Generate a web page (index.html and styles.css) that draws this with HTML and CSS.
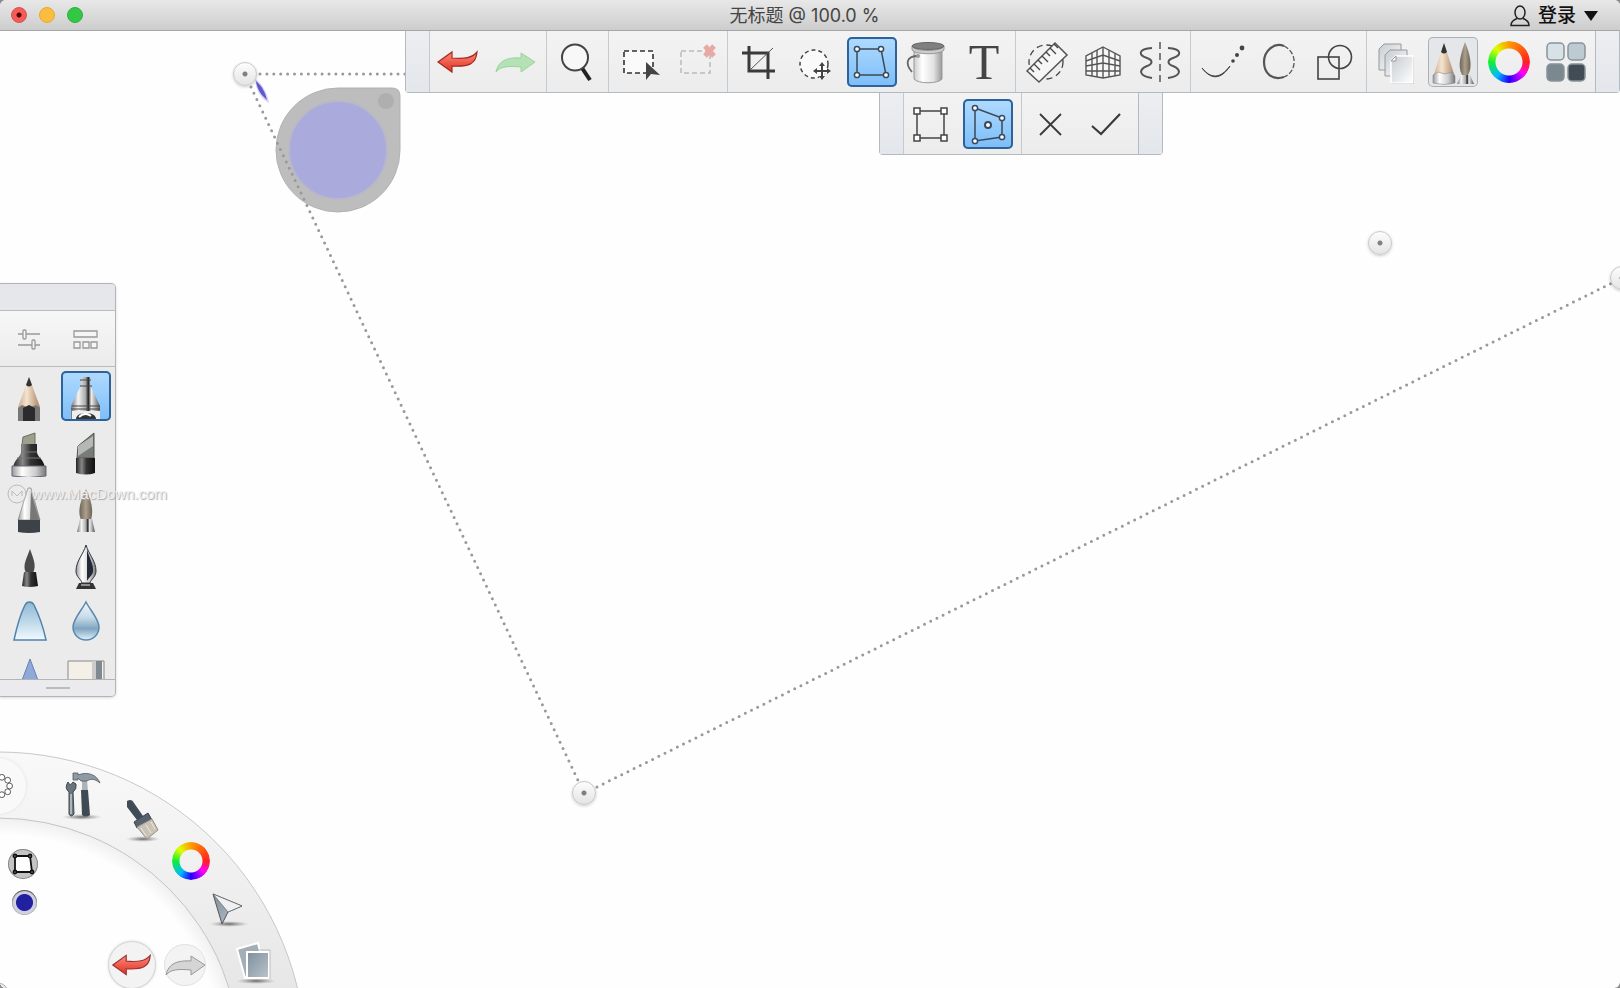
FILE: index.html
```html
<!DOCTYPE html>
<html lang="zh-CN">
<head>
  <meta charset="UTF-8">
  <meta name="viewport" content="width=device-width, initial-scale=1.0">
  <title>无标题 @ 100.0 %</title>
  <link rel="stylesheet" href="styles.css">
</head>
<body>
  <!-- shared gradients -->
  <svg class="defs" aria-hidden="true">
    <defs>
      <linearGradient id="red" x1="0" y1="0" x2="0" y2="1"><stop offset="0" stop-color="#ff8a7a"/><stop offset="1" stop-color="#df2f20"/></linearGradient>
      <linearGradient id="steel"><stop offset="0" stop-color="#777"/><stop offset=".25" stop-color="#f4f4f4"/><stop offset=".5" stop-color="#aaa"/><stop offset=".6" stop-color="#222"/><stop offset=".7" stop-color="#eee"/><stop offset="1" stop-color="#555"/></linearGradient>
      <linearGradient id="dark"><stop offset="0" stop-color="#222"/><stop offset=".3" stop-color="#888"/><stop offset=".55" stop-color="#333"/><stop offset="1" stop-color="#111"/></linearGradient>
      <linearGradient id="silver"><stop offset="0" stop-color="#999"/><stop offset=".3" stop-color="#fff"/><stop offset=".7" stop-color="#ccc"/><stop offset="1" stop-color="#777"/></linearGradient>
      <linearGradient id="wood"><stop offset="0" stop-color="#c9ad90"/><stop offset=".4" stop-color="#f5e4d0"/><stop offset="1" stop-color="#a98460"/></linearGradient>
      <linearGradient id="hair"><stop offset="0" stop-color="#6d655a"/><stop offset=".5" stop-color="#aca08c"/><stop offset="1" stop-color="#6d6254"/></linearGradient>
      <linearGradient id="water" x1="0" y1="0" x2="0" y2="1"><stop offset="0" stop-color="#8fb8d2"/><stop offset=".5" stop-color="#bcd7e8"/><stop offset="1" stop-color="#f2f9ff"/></linearGradient>
      <linearGradient id="drop" x1="0" y1="0" x2="0" y2="1"><stop offset="0" stop-color="#f0f8fc"/><stop offset=".4" stop-color="#c8dce8"/><stop offset=".7" stop-color="#7fa5c0"/><stop offset="1" stop-color="#e0f2fc"/></linearGradient>
      <linearGradient id="can"><stop offset="0" stop-color="#ccc"/><stop offset=".3" stop-color="#fff"/><stop offset=".7" stop-color="#e2e2e2"/><stop offset="1" stop-color="#999"/></linearGradient>
      <linearGradient id="paper" x1="0" y1="0" x2="1" y2="1"><stop offset="0" stop-color="#c5ccd2"/><stop offset="1" stop-color="#fff"/></linearGradient>
      <linearGradient id="slate" x1="0" y1="0" x2="1" y2="1"><stop offset="0" stop-color="#7f8e9d"/><stop offset="1" stop-color="#bac4cc"/></linearGradient>
      <linearGradient id="ring" x1="0" y1="0" x2="0" y2="1"><stop offset="0" stop-color="#f9f9f9"/><stop offset=".4" stop-color="#e6e6e6"/></linearGradient>
      <radialGradient id="well"><stop offset=".93" stop-color="#fefefe"/><stop offset="1" stop-color="#f0f0f0"/></radialGradient>
      <radialGradient id="floor"><stop offset="0" stop-color="#444" stop-opacity=".8"/><stop offset="1" stop-color="#888" stop-opacity="0"/></radialGradient>
    </defs>
  </svg>

  <div class="window">
    <header class="titlebar">
      <div class="lights">
        <button class="light close" aria-label="关闭"></button>
        <button class="light minimize" aria-label="最小化"></button>
        <button class="light maximize" aria-label="缩放"></button>
      </div>
      <h1 class="title">无标题 @ 100.0 %</h1>
      <button class="login">
        <svg width="20" height="22" viewBox="0 0 20 22" fill="none" stroke="#222" stroke-width="1.5"><ellipse cx="10" cy="7.500" rx="5" ry="6.500"/><path d="M7 13.500C3 15 1 16.500 1 20.500h18c0-4-2-5.500-6-7"/></svg>
        <span>登录</span>
        <svg width="14" height="10" viewBox="0 0 14 10"><path d="M0 0h14L7 10z" fill="#111"/></svg>
      </button>
    </header>

    <main class="canvas">
      <!-- distort outline and colour puck, in canvas coordinates -->
      <svg class="artwork" width="1620" height="957" viewBox="0 31 1620 957">
        <path d="M255 79c7 4 12 13 14 24-9-5-13-13-14-24z" fill="#c8c6f8" opacity=".8"/>
        <path d="M256 81c6 5 9 11 11 19-6-5-10-11-11-19z" fill="#5f58c8"/>
        <path d="M338 88h54q8 0 8 8v54a62 62 0 1 1-62-62z" fill="#bdbdbd" stroke="#b2b2b2"/>
        <circle cx="338" cy="150" r="49" fill="#aaaadc" stroke="#b8b8c8" stroke-width="2"/>
        <circle cx="386" cy="101" r="8" fill="#afafaf"/>
        <g fill="none" stroke="#999" stroke-width="3" stroke-linecap="round" stroke-dasharray="0 6.900">
          <path d="M260 74h160"/>
          <path d="M251 87L584 793"/>
          <path d="M597 787L1622 278"/>
        </g>
      </svg>
      <span class="handle handle-tl"></span>
      <span class="handle handle-bl"></span>
      <span class="handle handle-tr"></span>
      <span class="handle handle-center"></span>

      <div class="toolbars">
        <div class="toolbar">
          <div class="grip"></div>
          <div class="group">
            <button class="tool" aria-label="撤销"><svg viewBox="0 0 50 50"><path d="M3 25L17 15v6c13 1 20 0 25-6-1 12-8 15-25 14v6z" fill="url(#red)" stroke="#a32a20" stroke-width="1.2"/></svg></button>
            <button class="tool" aria-label="重做"><svg viewBox="0 0 50 50"><path d="M44 25L30 16v5C16 20 7 24 5 35c5-6 13-6 25-5v5z" fill="#b4e2b4" stroke="#9bd39e"/></svg></button>
          </div>
          <div class="group">
            <button class="tool" aria-label="缩放"><svg viewBox="0 0 50 50"><path d="M30 31l8 12" stroke="#222" stroke-width="4"/><circle cx="23" cy="20.500" r="13" fill="#f8f8f8" stroke="#444" stroke-width="2"/></svg></button>
          </div>
          <div class="group">
            <button class="tool" aria-label="选择"><svg viewBox="0 0 50 50"><rect x="9" y="14" width="29" height="22" fill="#fafafa" stroke="#333" stroke-width="1.600" stroke-dasharray="5 3"/><path d="M31 25v18l5-6 9 1z" fill="#444"/></svg></button>
            <button class="tool" aria-label="取消选择"><svg viewBox="0 0 50 50"><rect x="10" y="14" width="29" height="22" fill="none" stroke="#bbb" stroke-width="1.500" stroke-dasharray="5 3"/><path d="M34 9l9 10m0-10l-9 10" stroke="#e8a8a3" stroke-width="5"/></svg></button>
          </div>
          <div class="group">
            <button class="tool" aria-label="裁剪"><svg viewBox="0 0 50 50"><path d="M8 16h26v26M15 9v25h26" fill="none" stroke="#3a3a3a" stroke-width="3"/><path d="M16 33l23-22" stroke="#555"/></svg></button>
            <button class="tool" aria-label="快速变换"><svg viewBox="0 0 50 50"><circle cx="24" cy="27" r="14" fill="#fafafa" stroke="#444" stroke-width="1.500" stroke-dasharray="4 3"/><path d="M32 26v16M24 34h16" stroke="#fff" stroke-width="5"/><path d="M32 27v14M25 34h14" stroke="#444" stroke-width="2"/><path d="M32 25l3 4h-6zM32 43l3-4h-6zM23 34l4-3v6zM41 34l-4-3v6z" fill="#444"/></svg></button>
            <button class="tool selected" aria-label="变形"><svg viewBox="0 0 50 50" fill="#fff" stroke="#3a4a5a" stroke-width="1.500"><path d="M10 12h24l5 26H10z" fill="none"/><circle cx="10" cy="12" r="2.600"/><circle cx="34" cy="12" r="2.600"/><circle cx="39" cy="38" r="2.600"/><circle cx="10" cy="38" r="2.600"/></svg></button>
            <button class="tool" aria-label="填充"><svg viewBox="0 0 50 50"><path d="M11 11v31c4 5 24 5 28 0V11z" fill="url(#can)" stroke="#999"/><path d="M9 9c2 6 30 6 32 0v4c-3 5-29 5-32 0z" fill="#ccc" stroke="#888" stroke-width=".8"/><ellipse cx="25" cy="9" rx="16" ry="3.500" fill="#808080" stroke="#666"/><path d="M15 19C3 19 2 27 9 35" fill="none" stroke="#666" stroke-width="1.800"/><circle cx="15" cy="19" r="2" fill="#999"/></svg></button>
            <button class="tool letter">T</button>
          </div>
          <div class="group">
            <button class="tool" aria-label="尺子"><svg viewBox="0 0 50 50"><circle cx="24" cy="25" r="17" fill="none" stroke="#444" stroke-width="1.300" stroke-dasharray="6 4"/><path d="M5 34L33 6l12 12-28 27z" fill="#f6f6f6" stroke="#555" stroke-width="1.500"/><path d="M8 31l4 4m0-8l6 6m-2-10l4 4m0-8l6 6m-2-10l4 4m0-8l6 6m-2-10l4 4" stroke="#444" stroke-width="1.300"/></svg></button>
            <button class="tool" aria-label="透视"><svg viewBox="0 0 50 50" fill="none" stroke="#555" stroke-width="1.400"><path d="M25 10l17 9v19l-17 3-17-3V19z" fill="#f7f7f7"/><path d="M25 10v31M14 16v23M19 13v27M31 13v27M37 16v23M8 24l17-6 17 6M8 29l17-3 17 3M8 34h34"/></svg></button>
            <button class="tool" aria-label="对称"><svg viewBox="0 0 50 50" fill="none" stroke="#555"><path d="M26 5v41" stroke-width="1.500" stroke-dasharray="7 4"/><path d="M18 11C4 12 4 18 13 21c6 2 6 6 0 8-9 4-8 10 5 12M34 11c14 1 14 7 5 10-6 2-6 6 0 8 9 4 8 10-5 12" stroke-width="2"/></svg></button>
          </div>
          <div class="group">
            <button class="tool" aria-label="稳定笔触"><svg viewBox="0 0 50 50"><path d="M4 31c9 11 18 11 28-2-9 14-19 14-28 2z" fill="#444" stroke="#444"/><circle cx="35" cy="24" r="1.800" fill="#444"/><circle cx="39" cy="18" r="2" fill="#444"/><circle cx="44" cy="11" r="2.400" fill="#444"/></svg></button>
            <button class="tool" aria-label="椭圆"><svg viewBox="0 0 50 50" fill="none" stroke="#555"><path d="M30 9C20 5 10 14 10 25s8 19 20 15" stroke-width="2.200"/><path d="M30 9c13 6 14 25 0 31" stroke-width="1.300" stroke-dasharray="5 2"/></svg></button>
            <button class="tool" aria-label="形状"><svg viewBox="0 0 50 50" fill="none" stroke="#444" stroke-width="1.600"><rect x="8" y="20" width="21" height="22"/><circle cx="30" cy="20" r="11.500"/></svg></button>
          </div>
          <div class="group">
            <button class="tool" aria-label="图层"><svg viewBox="0 0 50 50" stroke="#999"><path d="M11 7h17v26H6V12z" fill="url(#paper)"/><path d="M17 13h17v26H12V18z" fill="url(#paper)"/><path d="M40 20v26H18" fill="none" stroke="#888" stroke-width="2"/><path d="M23 19h17v27H18V24z" fill="url(#paper)" stroke="#fff" stroke-width="1.500"/><path d="M18 24h5v-5z" fill="#fff"/></svg></button>
            <button class="tool framed" aria-label="笔刷"><svg viewBox="0 0 50 50"><path d="M16 6l11 34c-5 8-18 8-22 0z" fill="url(#wood)"/><path d="M16 6l3 9c-2 2-4 2-6 0z" fill="#333"/><path d="M5 38l5-3 7 2 7-2 3 4v7q-11 3-22 0z" fill="url(#silver)" stroke="#888" stroke-width=".6"/><path d="M37 5c5 12 8 25 3 33h-6c-5-9-1-22 3-33z" fill="url(#hair)"/><path d="M33 38h9l4 9H29z" fill="url(#steel)"/></svg></button>
            <button class="tool" aria-label="颜色"><span class="color-ring"></span></button>
            <button class="tool" aria-label="界面"><svg viewBox="0 0 50 50" stroke="#899399" stroke-width="1.500"><rect x="8" y="6" width="17" height="17" rx="4" fill="#d7e1e6"/><rect x="29" y="6" width="17" height="17" rx="4" fill="#bccbd2"/><rect x="8" y="27" width="17" height="17" rx="4" fill="#7a898f"/><rect x="29" y="27" width="17" height="17" rx="4" fill="#414c54"/></svg></button>
          </div>
          <div class="grip"></div>
        </div>

        <div class="subbar">
          <div class="grip"></div>
          <div class="group">
            <button class="tool" aria-label="自由变换"><svg viewBox="0 0 50 50" fill="#fff" stroke="#444" stroke-width="1.500"><rect x="10" y="12" width="27" height="27" fill="none"/><path d="M7 9h6v6H7zM34 9h6v6h-6zM7 36h6v6H7zM34 36h6v6h-6z"/></svg></button>
            <button class="tool selected" aria-label="扭曲"><svg viewBox="0 0 50 50" fill="#fff" stroke="#3a4a5a" stroke-width="1.500"><path d="M12 9l27 10v19l-27 4z" fill="none"/><circle cx="12" cy="9" r="2.600"/><circle cx="39" cy="19" r="2.600"/><circle cx="39" cy="38" r="2.600"/><circle cx="12" cy="42" r="2.600"/><circle cx="25" cy="26" r="3" stroke-width="2"/></svg></button>
          </div>
          <div class="group">
            <button class="tool" aria-label="取消"><svg viewBox="0 0 50 50"><path d="M15 15l21 21m0-21L15 36" stroke="#3a3a3a" stroke-width="1.800"/></svg></button>
            <button class="tool" aria-label="完成"><svg viewBox="0 0 50 50"><path d="M11 27l9 8 19-20" fill="none" stroke="#3a3a3a" stroke-width="2.200"/></svg></button>
          </div>
          <div class="grip"></div>
        </div>
      </div>

      <aside class="palette">
        <div class="palette-grip"></div>
        <div class="palette-head">
          <button class="tool" aria-label="笔刷属性"><svg viewBox="0 0 50 50" fill="#f5f5f5" stroke="#999" stroke-width="1.300"><path d="M14 20h22M14 31h22"/><rect x="19" y="16" width="3" height="9" rx="1"/><rect x="28" y="26" width="3" height="9" rx="1"/></svg></button>
          <button class="tool" aria-label="笔刷库"><svg viewBox="0 0 50 50" fill="#f5f5f5" stroke="#999" stroke-width="1.300"><path d="M13 17h23v6H13zM13 28h6v6h-6zM22 28h6v6h-6zM30 28h6v6h-6z"/></svg></button>
        </div>
        <div class="brushes">
          <button class="tool" aria-label="铅笔"><svg viewBox="0 0 50 50"><path d="M25 6l11 30v14H14V36z" fill="url(#wood)"/><path d="M25 6l3 8c-2 2-4 2-6 0z" fill="#333"/><path d="M14 37l4-3 7 3 7-3 4 3v13H14z" fill="#777"/><path d="M19 37l6-3 6 3v13H19z" fill="#2b2b2b"/></svg></button>
          <button class="tool selected" aria-label="喷枪"><svg viewBox="0 0 50 50"><path d="M20 6h9v9l2 3 8 17v13H10V35l8-17 2-3z" fill="url(#steel)"/><path d="M19 9h11M19 15h12M11 35h28M10 38h29" stroke="#444"/><path d="M11 40h28v8H11z" fill="#eee"/><path d="M15 48c0-8 20-8 20 0" fill="#333"/><path d="M18 46c4-4 8-4 12-1" stroke="#fff" fill="none" stroke-width="2"/></svg></button>
          <button class="tool" aria-label="马克笔"><svg viewBox="0 0 50 50"><path d="M19 10l12-4v12H18z" fill="#9ca18d" stroke="#6b705d"/><path d="M17 17h16v8c0 5 7 7 8 16H9c1-9 8-11 8-16z" fill="url(#dark)"/><path d="M17 25h16M13 31h24" stroke="#777"/><path d="M8 39h34v10q-17 3-34 0z" fill="url(#silver)" stroke="#667"/></svg></button>
          <button class="tool" aria-label="凿头笔"><svg viewBox="0 0 50 50"><path d="M17 19L33 6v25H16z" fill="#777c78" stroke="#555"/><path d="M17 19l15-10v10L17 29z" fill="#b5b8b5"/><path d="M15 31h19v15q-9 3-19 0z" fill="url(#dark)"/></svg></button>
          <button class="tool" aria-label="圆珠笔"><svg viewBox="0 0 50 50"><path d="M24 5h3l9 32H14z" fill="url(#silver)" stroke="#777" stroke-width=".6"/><path d="M27 8l8 29h-9z" fill="#777"/><path d="M14 37h22v12q-11 2-22 0z" fill="#3d4248"/></svg></button>
          <button class="tool" aria-label="画笔"><svg viewBox="0 0 50 50"><path d="M25 6c5 10 8 21 5 31H20c-4-10 0-21 5-31z" fill="url(#hair)"/><path d="M19 36h12l3 13H16z" fill="url(#steel)"/></svg></button>
          <button class="tool" aria-label="合成画笔"><svg viewBox="0 0 50 50"><path d="M26 10c3 9 7 16 3 24h-7c-4-8 1-15 4-24z" fill="#4a4a48"/><path d="M20 33h12l2 14q-9 2-16 0z" fill="url(#dark)"/></svg></button>
          <button class="tool" aria-label="钢笔"><svg viewBox="0 0 50 50"><path d="M25 6c3 10 10 16 10 26 0 6-5 8-6 12h-8c-1-4-6-6-6-12C15 22 22 16 25 6z" fill="url(#silver)" stroke="#334"/><path d="M26 10c2 9 7 15 6 23-1 4-4 5-6 9z" fill="#222a38"/><path d="M18 44h14l3 6H15z" fill="#333"/><path d="M20 46h9" stroke="#eee"/></svg></button>
          <button class="tool" aria-label="涂抹"><svg viewBox="0 0 50 50"><path d="M21 10c2-4 7-4 9 0 5 10 9 21 12 35H10c3-14 6-25 11-35z" fill="url(#water)" stroke="#4f82ad" stroke-width="1.500"/></svg></button>
          <button class="tool" aria-label="模糊"><svg viewBox="0 0 50 50"><path d="M25 7c4 8 13 17 13 25a13 13 0 0 1-26 0c0-8 9-17 13-25z" fill="url(#drop)" stroke="#5a88ad" stroke-width="1.500"/></svg></button>
          <button class="tool" aria-label="锐化"><svg viewBox="0 0 50 50"><path d="M26 8l15 40H11z" fill="#8fa9d8" stroke="#6480b5"/></svg></button>
          <button class="tool" aria-label="橡皮"><svg viewBox="0 0 50 50"><path d="M7 10h36v40H7z" fill="#f4f0e8" stroke="#888"/><path d="M31 10h4v40h-4z" fill="#ccc"/><path d="M35 10h6v40h-6z" fill="#808890"/></svg></button>
        </div>
        <div class="palette-foot"></div>
      </aside>

      <div class="watermark">
        <svg width="20" height="20" viewBox="0 0 20 20" fill="none" stroke="#bbb"><circle cx="10" cy="10" r="9"/><path d="M5 12V7l5 5 5-5v5"/></svg>
        <span>www.MacDown.com</span>
      </div>

      <div class="lagoon">
        <svg class="lagoon-ring" viewBox="0 0 310 237">
          <circle cx="-2" cy="309" r="308" fill="url(#ring)" stroke="#c8c8c8"/>
          <circle cx="-2" cy="309" r="242" fill="url(#well)" stroke="#c4c4c4"/>
          <circle cx="-2" cy="242" r="10" fill="#eee" stroke="#aaa"/>
        </svg>
        <button class="lagoon-btn menu" aria-label="控件"><svg viewBox="0 0 56 56" fill="#fff" stroke="#555"><circle cx="31" cy="19" r="3"/><circle cx="37" cy="22" r="3"/><circle cx="39" cy="28" r="3"/><circle cx="37" cy="34" r="3"/><circle cx="31" cy="37" r="3"/></svg></button>
        <button class="lagoon-btn tools" aria-label="工具"><svg viewBox="0 0 50 50"><ellipse cx="25" cy="47" rx="20" ry="3" fill="url(#floor)"/><path d="M11 12q2 5 5 0l3 2q1 5-3 8l1 22q-3 4-5 0V22q-5-4-1-10z" fill="#6b757e" stroke="#3f4850"/><path d="M14 24v20" stroke="#c5cdd3" stroke-width="1.500"/><path d="M25 10h5l1 12h-6z" fill="#aab3ba"/><path d="M24 20h7l2 25q-4 3-8 0z" fill="#3f4a54"/><path d="M16 3h5v2c10-4 19 0 22 8-6-5-10-4-13-2h-6l-3-3v2h-5z" fill="#8f9aa3" stroke="#4f5962" stroke-width=".8"/></svg></button>
        <button class="lagoon-btn brush" aria-label="笔刷"><svg viewBox="0 0 50 50"><ellipse cx="25" cy="45" rx="17" ry="3" fill="url(#floor)"/><path d="M9 7q5-3 7 2l9 13-6 4L9 13z" fill="#404b58"/><path d="M16 28l14-9 4 7-15 8z" fill="#56626f" stroke="#39434e"/><path d="M19 33l15-8 6 11-11 9z" fill="#c9c2b7" stroke="#999184"/><path d="M23 34l5 8m0-11l5 8m0-11l4 7" stroke="#eee8de"/></svg></button>
        <button class="lagoon-btn color" aria-label="颜色"><span class="color-ring"></span></button>
        <button class="lagoon-btn view" aria-label="视图"><svg viewBox="0 0 50 50"><ellipse cx="26" cy="41" rx="20" ry="3" fill="url(#floor)"/><path d="M10 11l29 12-14 6-6 12z" fill="url(#slate)" stroke="#555" stroke-linejoin="round"/><path d="M10 11l29 12-14 6z" fill="#eef0f2" stroke="#666" stroke-width=".7"/></svg></button>
        <button class="lagoon-btn files" aria-label="文件"><svg viewBox="0 0 50 50"><ellipse cx="27" cy="45" rx="20" ry="3" fill="url(#floor)"/><path d="M8 13l21-6 7 30-20 5z" fill="#a3afb6" stroke="#fff" stroke-width="2"/><path d="M18 16h22v26H18z" fill="url(#slate)" stroke="#fff" stroke-width="2"/><path d="M17 14h24v29" fill="none" stroke="#aaa" stroke-width=".7"/></svg></button>
        <button class="lagoon-btn puck" aria-label="当前工具"><svg viewBox="0 0 30 30" fill="#ddd" stroke="#111" stroke-width="1.800"><path d="M7 7h15l2 16H7z" fill="#fff"/><circle cx="7" cy="7" r="1.500"/><circle cx="22" cy="7" r="1.500"/><circle cx="24" cy="23" r="1.500"/><circle cx="7" cy="23" r="1.500"/></svg></button>
        <button class="lagoon-btn swatch" aria-label="当前颜色"></button>
        <button class="lagoon-btn undo" aria-label="撤销"><svg viewBox="0 0 50 50"><path d="M5 25l14-10v6c13 1 20 0 25-6-1 12-8 15-25 14v6z" fill="url(#red)" stroke="#933" stroke-width="1.200"/></svg></button>
        <button class="lagoon-btn redo" aria-label="重做"><svg viewBox="0 0 42 42"><path d="M41 21L27 12v5C13 16 4 20 2 31c5-6 13-6 25-5v5z" fill="#d5d5d5" stroke="#999"/></svg></button>
      </div>
    </main>
  </div>
</body>
</html>
```
FILE: styles.css
```css
* { box-sizing: border-box; }
body { margin: 0; background: #8a8a8a; font-family: Inter, "Noto Sans CJK SC", sans-serif; }
button { padding: 0; border: none; background: none; font: inherit; color: inherit; cursor: pointer; }
svg { display: block; }
.defs { position: absolute; width: 0; height: 0; }

.window { display: flex; flex-direction: column; height: 100vh; border-radius: 6px; overflow: hidden; background: #fefefe; }

/* title bar */
.titlebar { display: grid; grid-template-columns: 1fr auto 1fr; align-items: center; height: 31px; padding: 0 22px 0 11px; background: linear-gradient(#e8e8e8, #cdcdcd); border-bottom: 1px solid #a6a6a6; }
.lights { display: flex; gap: 12px; }
.light { width: 16px; height: 16px; border-radius: 50%; }
.close { background: radial-gradient(circle, #5a0505 2px, #f25e57 3px); border: 1px solid #dd4f48; }
.minimize { background: #fbbd3f; border: 1px solid #e5a937; }
.maximize { background: #32c846; border: 1px solid #2bb13c; }
.title { margin: 0; padding-top: 2px; font-size: 18px; line-height: 28px; font-weight: 400; color: #444; }
.login { display: flex; align-items: center; gap: 8px; justify-self: end; padding-top: 2px; font-size: 19px; line-height: 28px; font-weight: 500; color: #111; }

.canvas { position: relative; flex: 1; overflow: hidden; }
.artwork { position: absolute; top: 0; left: 0; }

/* transform handles */
.handle { position: absolute; width: 24px; height: 24px; border-radius: 50%; border: 1px solid #c8c8c8; background: radial-gradient(circle, #808080 2px, transparent 3px), linear-gradient(#fdfdfd, #e4e4e4); box-shadow: 0 1px 3px rgba(0, 0, 0, .2); }
.handle-tl { left: 233px; top: 31px; }
.handle-bl { left: 572px; top: 750px; }
.handle-tr { left: 1610px; top: 235px; }
.handle-center { left: 1368px; top: 200px; }

/* toolbars */
.toolbars { position: relative; margin-left: 25%; }
.toolbar { display: grid; grid-template-columns: 23px 117fr 62fr 119fr 289fr 175fr 176fr 229fr 24px; height: 62px; border: 1px solid #b4bbc0; border-top: none; border-radius: 0 0 4px 4px; background: linear-gradient(#f3f3f3, #ececec); }
.group { display: flex; align-items: center; justify-content: space-evenly; border-left: 1px solid #c3cad0; }
.grip { background: linear-gradient(#eceef2, #e3e6ea); }
.grip:last-child { border-left: 1px solid #b4bbc0; }
.subbar { display: grid; grid-template-columns: 23px 118px 117px 24px; width: 284px; height: 62px; margin-left: 39%; border: 1px solid #b4bbc0; border-top: none; border-radius: 0 0 4px 4px; background: linear-gradient(#f3f3f3, #ececec); }
.subbar .group { justify-content: flex-start; gap: 6px; padding-left: 3px; }
.tool { flex: none; width: 50px; height: 50px; border-radius: 5px; }
.tool svg { width: 50px; height: 50px; }
.tool.selected { background: linear-gradient(#b0dbff, #7cbdf8); box-shadow: inset 0 0 0 2px #2d6398; }
.tool.framed { background: #e4e6ea; box-shadow: inset 0 0 0 1px #a9b0b8; }
.letter { font: 50px/50px "Liberation Serif", serif; color: #444; }
.color-ring { display: block; width: 42px; height: 42px; margin: 0 auto; border-radius: 50%; background: conic-gradient(#ff9a00, #ff2020 90deg, #f0f 130deg, #20f 180deg, #0bf 220deg, #1e3 270deg, #df0 315deg, #ff9a00); -webkit-mask: radial-gradient(circle, transparent 13px, #000 14px); mask: radial-gradient(circle, transparent 13px, #000 14px); }

/* brush palette */
.palette { position: absolute; left: 0; top: 252px; width: 116px; border: 1px solid #b4b4b4; border-left: none; border-radius: 0 5px 5px 0; background: #ebebeb; box-shadow: 0 1px 3px rgba(0, 0, 0, .15); overflow: hidden; }
.palette-grip { height: 27px; background: #e6e7ea; border-bottom: 1px solid #bbb; }
.palette-head { display: flex; gap: 7px; height: 56px; padding: 3px 4px; background: linear-gradient(#f7f7f7, #ebebeb); border-bottom: 1px solid #bbb; }
.brushes { display: grid; grid-template-columns: 50px 50px; gap: 6px 7px; height: 312px; padding: 4px; overflow: hidden; }
.palette-foot { display: flex; align-items: center; justify-content: center; height: 17px; background: #ebebed; border-top: 1px solid #b4b4b4; }
.palette-foot::after { content: ""; width: 24px; height: 2px; background: #bbb; }

.watermark { position: absolute; left: 7px; top: 453px; display: flex; align-items: center; gap: 5px; font: 15px/20px "Liberation Sans", sans-serif; color: #eee; text-shadow: 1px 1px 1px #aaa; }

/* lagoon */
.lagoon { position: absolute; left: 0; bottom: 0; width: 310px; height: 237px; }
.lagoon-ring { width: 310px; height: 237px; }
.lagoon-btn { position: absolute; width: 50px; height: 50px; border-radius: 50%; }
.menu { left: -30px; top: 7px; width: 56px; height: 56px; background: #f9f9f9; box-shadow: 0 0 3px #ddd; }
.menu svg { margin-left: 2px; }
.tools { left: 57px; top: 19px; }
.brush { left: 118px; top: 43px; }
.color { left: 166px; top: 85px; }
.color .color-ring { width: 38px; height: 38px; -webkit-mask: radial-gradient(circle, transparent 11px, #000 12px); mask: radial-gradient(circle, transparent 11px, #000 12px); }
.view { left: 203px; top: 132px; }
.files { left: 229px; top: 185px; }
.puck { left: 8px; top: 98px; width: 30px; height: 30px; background: #c4c4c4; box-shadow: inset 0 0 0 1px #888; }
.swatch { left: 12px; top: 139px; width: 25px; height: 25px; background: radial-gradient(circle, #2020a0 8px, #d0d0e2 9px); box-shadow: inset 0 1px 1px #555, inset 0 0 0 1px #bbb; }
.undo { left: 108px; top: 190px; width: 48px; height: 48px; background: #f3f3f3; box-shadow: inset 0 0 0 1px #d5d5d5, 0 0 3px #ddd; }
.redo { left: 164px; top: 193px; width: 42px; height: 42px; background: #f3f3f3; box-shadow: inset 0 0 0 1px #e2e2e2; }
```
